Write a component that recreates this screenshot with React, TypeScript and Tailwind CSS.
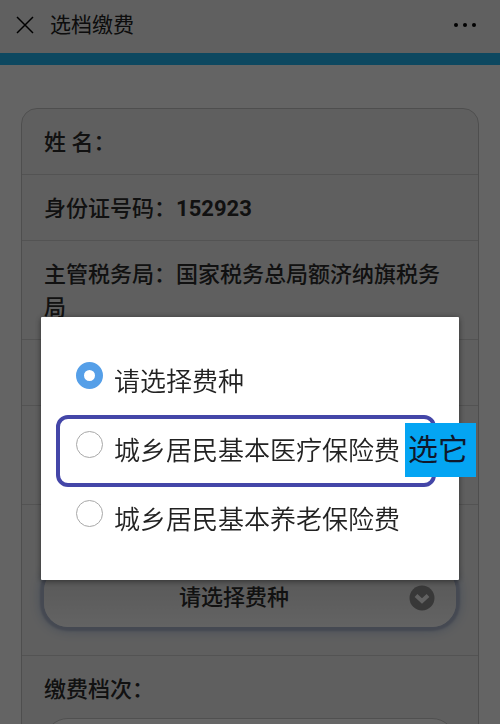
import { useState } from 'react';
import type { ReactNode } from 'react';

const FEE_TYPES = ['请选择费种', '城乡居民基本医疗保险费', '城乡居民基本养老保险费'];

function Row({ children }: { children?: ReactNode }) {
  return <li className="min-h-[66px] border-b border-[#d0d0d0] px-[22px] pt-[17px] pb-[15px] last:border-b-0">{children}</li>;
}

function TopBar() {
  return (
    <header className="flex h-[65px] items-center border-b-[12px] border-[#22b4f0] bg-[#f0f0f0] px-4 pb-1">
      <button type="button" aria-label="关闭" className="text-black">
        <svg width="18" height="18" viewBox="0 0 18 18" fill="none" stroke="currentColor" strokeWidth="1.5">
          <path d="M1 1l16 16M17 1L1 17" />
        </svg>
      </button>
      <h1 className="ml-4 flex-1 pt-0.5 text-[21px] text-[#222]">选档缴费</h1>
      <button type="button" aria-label="更多" className="mr-2 text-black">
        <svg width="22" height="6" viewBox="0 0 22 6" fill="currentColor">
          <circle cx="2" cy="3" r="2" />
          <circle cx="11" cy="3" r="2" />
          <circle cx="20" cy="3" r="2" />
        </svg>
      </button>
    </header>
  );
}

interface FeeDialogProps {
  value: number;
  onChange: (index: number) => void;
}

function FeeDialog({ value, onChange }: FeeDialogProps) {
  return (
    <div className="fixed inset-0 flex items-start bg-black/60 px-[41px] pt-[317px]">
      <div
        role="dialog"
        aria-label="费种"
        className="flex flex-1 flex-col gap-[29px] rounded-[1px] bg-white pt-[45px] pr-[23px] pb-10 pl-[35px] shadow-[0_1px_6px_rgba(0,0,0,0.5)]"
      >
        {FEE_TYPES.map((name, i) => (
          <div key={name} className="relative">
            <label className="flex items-start gap-[11px] text-[26px] leading-10 font-[350] whitespace-nowrap text-[#222]">
              <input
                type="radio"
                name="fee"
                checked={value === i}
                onChange={() => onChange(i)}
                className="size-[27px] shrink-0 appearance-none rounded-full border border-[#a8a8a8] bg-white checked:border-8 checked:border-[#559fe8]"
              />
              {name}
            </label>
            {i === 1 && (
              <>
                <div className="pointer-events-none absolute -inset-y-4 right-0 -left-5 rounded-xl border-4 border-[#4446a8]" />
                <span className="absolute -top-2 -right-10 bg-[#04a5f3] pr-2 pl-[3px] text-[30px] leading-[54px] text-[#10182c]">
                  选它
                </span>
              </>
            )}
          </div>
        ))}
      </div>
    </div>
  );
}

export default function App() {
  const [fee, setFee] = useState(0);

  return (
    <div className="h-screen overflow-hidden bg-[#fafafa] font-[Roboto,'Noto_Sans_CJK_SC',sans-serif]">
      <TopBar />

      <main className="px-[21px] pt-[43px]">
        <ul className="rounded-2xl border border-[#c4c4c4] bg-[#eee] text-[22px] leading-[33px] font-medium text-[#2c2c2c]">
          <Row>姓 名：</Row>
          <Row>
            身份证号码：<span className="font-bold">152923</span>
          </Row>
          <Row>主管税务局：国家税务总局额济纳旗税务局</Row>
          <Row />
          <Row>
            <div className="h-[66px]" />
          </Row>
          <Row>
            {/* Focused select */}
            <div className="relative mt-[45px] mb-[13px]">
              <select
                aria-label="费种"
                value={fee}
                onChange={(e) => setFee(Number(e.target.value))}
                className="block h-[60px] w-full appearance-none rounded-3xl bg-linear-to-b from-[#d8d8d8] to-[#f8f8f8] pr-8 text-center shadow-[0_0_2px_4px_#adb6cc,0_0_12px_4px_#b4c4dc]"
              >
                {FEE_TYPES.map((name, i) => (
                  <option key={name} value={i}>{name}</option>
                ))}
              </select>
              <svg className="pointer-events-none absolute top-[18px] right-[21px]" width="26" height="26" viewBox="0 0 26 26">
                <circle cx="13" cy="13" r="12.5" fill="#8c8c8c" />
                <path d="M7 10.5l6 5.5 6-5.5" fill="none" stroke="#f4f4f4" strokeWidth="4" />
              </svg>
            </div>
          </Row>
          <Row>
            <label htmlFor="level">缴费档次：</label>
            <select
              id="level"
              className="mt-3 block h-[60px] w-full appearance-none rounded-3xl border border-[#c8c8c8] bg-linear-to-b from-white to-[#f1f1f1]"
            />
          </Row>
        </ul>
      </main>

      <FeeDialog value={fee} onChange={setFee} />
    </div>
  );
}
